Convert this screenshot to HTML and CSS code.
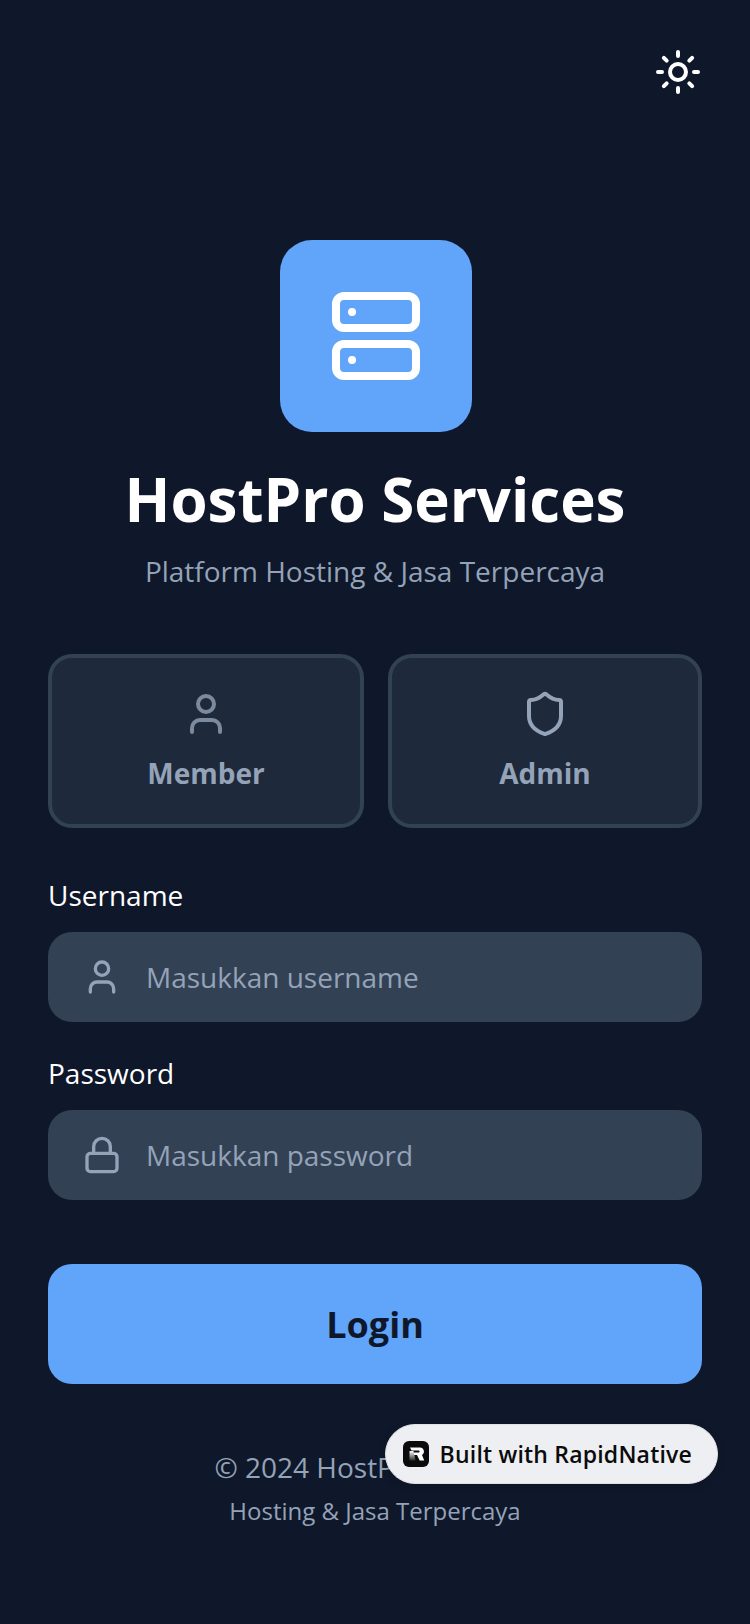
FILE: index.html
```html
<!DOCTYPE html>
<html lang="id">
<head>
    <meta charset="UTF-8">
    <meta name="viewport" content="width=device-width, initial-scale=1.0">
    <title>HostPro Services</title>
    <link rel="stylesheet" href="styles.css">
</head>
<body>

    <main class="screen">
        <div class="top-bar">
            <button class="theme-toggle" aria-label="Ganti tema">
                <svg class="icon-sun" viewBox="0 0 24 24">
                    <circle cx="12" cy="12" r="4"/>
                    <path d="M12 2v2M12 20v2M4.93 4.93l1.41 1.41M17.66 17.66l1.41 1.41M2 12h2M20 12h2M6.34 17.66l-1.41 1.41M19.07 4.93l-1.41 1.41"/>
                </svg>
            </button>
        </div>

        <div class="brand">
            <div class="logo">
                <svg class="icon-server" viewBox="0 0 24 24">
                    <rect x="2" y="2" width="20" height="8" rx="2"/>
                    <rect x="2" y="14" width="20" height="8" rx="2"/>
                    <path d="M6 6h.01M6 18h.01"/>
                </svg>
            </div>
            <h1>HostPro Services</h1>
            <p class="tagline">Platform Hosting &amp; Jasa Terpercaya</p>
        </div>

        <div class="roles">
            <button class="role role-member">
                <svg class="icon-role icon-dim" viewBox="0 0 24 24">
                    <path d="M19 21v-2a4 4 0 0 0-4-4H9a4 4 0 0 0-4 4v2"/>
                    <circle cx="12" cy="7" r="4"/>
                </svg>
                <span>Member</span>
            </button>
            <button class="role role-admin">
                <svg class="icon-role" viewBox="0 0 24 24">
                    <path d="M20 13c0 5-3.5 7.5-7.66 8.95a1 1 0 0 1-.67-.01C7.5 20.5 4 18 4 13V6a1 1 0 0 1 1-1c2 0 4.5-1.2 6.24-2.72a1.17 1.17 0 0 1 1.52 0C14.51 3.81 17 5 19 5a1 1 0 0 1 1 1z"/>
                </svg>
                <span>Admin</span>
            </button>
        </div>

        <form class="login-form">
            <label class="field-label" for="username">Username</label>
            <div class="field">
                <svg class="icon-field" viewBox="0 0 24 24">
                    <path d="M19 21v-2a4 4 0 0 0-4-4H9a4 4 0 0 0-4 4v2"/>
                    <circle cx="12" cy="7" r="4"/>
                </svg>
                <input type="text" id="username" placeholder="Masukkan username">
            </div>

            <label class="field-label" for="password">Password</label>
            <div class="field">
                <svg class="icon-field" viewBox="0 0 24 24">
                    <rect x="3" y="11" width="18" height="11" rx="2"/>
                    <path d="M7 11V7a5 5 0 0 1 10 0v4"/>
                </svg>
                <input type="password" id="password" placeholder="Masukkan password">
            </div>

            <button type="button" class="login-btn">Login</button>
        </form>

        <footer class="footer">
            <p class="copyright">© 2024 HostPro Services</p>
            <p class="footer-note">Hosting &amp; Jasa Terpercaya</p>
        </footer>
    </main>

    <a class="built-badge" href="#">
        <svg class="badge-logo" viewBox="0 0 26 26">
            <defs>
                <linearGradient id="stemFade" x1="0" y1="0" x2="0" y2="1">
                    <stop offset="0" stop-color="#fff"/>
                    <stop offset="1" stop-color="#2a2a2c"/>
                </linearGradient>
            </defs>
            <rect width="26" height="26" rx="6" fill="#0b0b0c"/>
            <path d="M7 6.5h10a4 4 0 0 1 2 7.4l2.2 5.6h-4.5l-2.7-5.5h-4l-1-2.6h6.6a1 1 0 0 0 0-2H8.5z" fill="#fff"/>
            <path d="M6.5 10h4l2 9.5h-6z" fill="url(#stemFade)"/>
        </svg>
        <span>Built with RapidNative</span>
    </a>

</body>
</html>
```

FILE: styles.css
```css
* {
    box-sizing: border-box;
}
html, body {
    margin: 0;
    height: 100%;
}
body {
    position: relative;
    width: 750px;
    min-height: 1624px;
    overflow: hidden;
    background-color: #0f172a;
    font-family: "Open Sans", sans-serif;
    color: #fff;
}
p, h1 {
    margin: 0;
}
button {
    font-family: inherit;
    cursor: pointer;
}
svg {
    display: block;
    fill: none;
    stroke-linecap: round;
    stroke-linejoin: round;
    stroke-width: 2;
}

.screen {
    padding: 48px 48px 0;
}
.top-bar {
    display: flex;
    justify-content: flex-end;
}
.theme-toggle {
    padding: 0;
    background: none;
    border: none;
}
.icon-sun {
    width: 48px;
    height: 48px;
    stroke: #fff;
}

/* Logo + title */
.brand {
    display: flex;
    flex-direction: column;
    align-items: center;
    margin-top: 144px;
}
.logo {
    display: flex;
    align-items: center;
    justify-content: center;
    width: 192px;
    height: 192px;
    margin-left: 2px;
    border-radius: 32px;
    background-color: #60a5fa;
}
.icon-server {
    width: 96px;
    height: 96px;
    stroke: #fff;
}
h1 {
    margin-top: 29px;
    font-size: 60px;
    line-height: 76px;
    font-weight: 700;
}
.tagline {
    margin-top: 14px;
    font-size: 28px;
    line-height: 40px;
    color: #94a3b8;
}

/* Member / Admin */
.roles {
    display: flex;
    gap: 24px;
    margin-top: 63px;
}
.role {
    display: flex;
    flex-direction: column;
    align-items: center;
    gap: 15px;
    flex: 1 1 0;
    height: 174px;
    padding: 32px 0 0;
    background-color: #1e293b;
    border: 4px solid #334155;
    border-radius: 24px;
    color: #94a3b8;
    font-size: 28px;
    line-height: 40px;
    font-weight: 700;
}
.role-member {
    flex-grow: 1.0064;
}
.icon-role {
    width: 48px;
    height: 48px;
    stroke: #94a3b8;
}
.icon-dim {
    opacity: 0.8;
}

/* Form */
.login-form {
    margin-top: 48px;
}
.field-label {
    display: block;
    margin-bottom: 18px;
    font-size: 28px;
    line-height: 38px;
}
.field {
    display: flex;
    align-items: center;
    gap: 24px;
    height: 90px;
    margin-bottom: 32px;
    padding: 0 32px 0 34px;
    background-color: #334155;
    border-radius: 24px;
}
.icon-field {
    flex: none;
    width: 40px;
    height: 40px;
    stroke: #94a3b8;
}
.field input {
    flex: 1;
    min-width: 0;
    padding: 0;
    background: none;
    border: none;
    outline: none;
    font-family: inherit;
    font-size: 28px;
    color: #fff;
}
.field input::placeholder {
    color: #94a3b8;
    opacity: 1;
}
.login-btn {
    display: block;
    width: 100%;
    height: 120px;
    margin-top: 64px;
    background-color: #60a5fa;
    border: none;
    border-radius: 24px;
    color: #0f172a;
    font-size: 36px;
    font-weight: 700;
}

/* Footer */
.footer {
    margin-top: 63px;
    text-align: center;
    color: #94a3b8;
}
.copyright {
    font-size: 28px;
    line-height: 40px;
}
.footer-note {
    margin-top: 6px;
    font-size: 24px;
    line-height: 36px;
}

/* Floating badge */
.built-badge {
    position: absolute;
    top: 1424px;
    right: 32px;
    display: flex;
    align-items: center;
    gap: 11px;
    height: 60px;
    padding: 0 25px 0 17px;
    background-color: #eeeff2;
    border: 1px solid #dfe1e6;
    border-radius: 30px;
    box-shadow: 0 2px 8px rgba(0, 0, 0, 0.15);
    color: #0b0b0c;
    font-size: 23px;
    letter-spacing: 0.2px;
    font-weight: 600;
    text-decoration: none;
}
.badge-logo {
    width: 26px;
    height: 26px;
}
```
